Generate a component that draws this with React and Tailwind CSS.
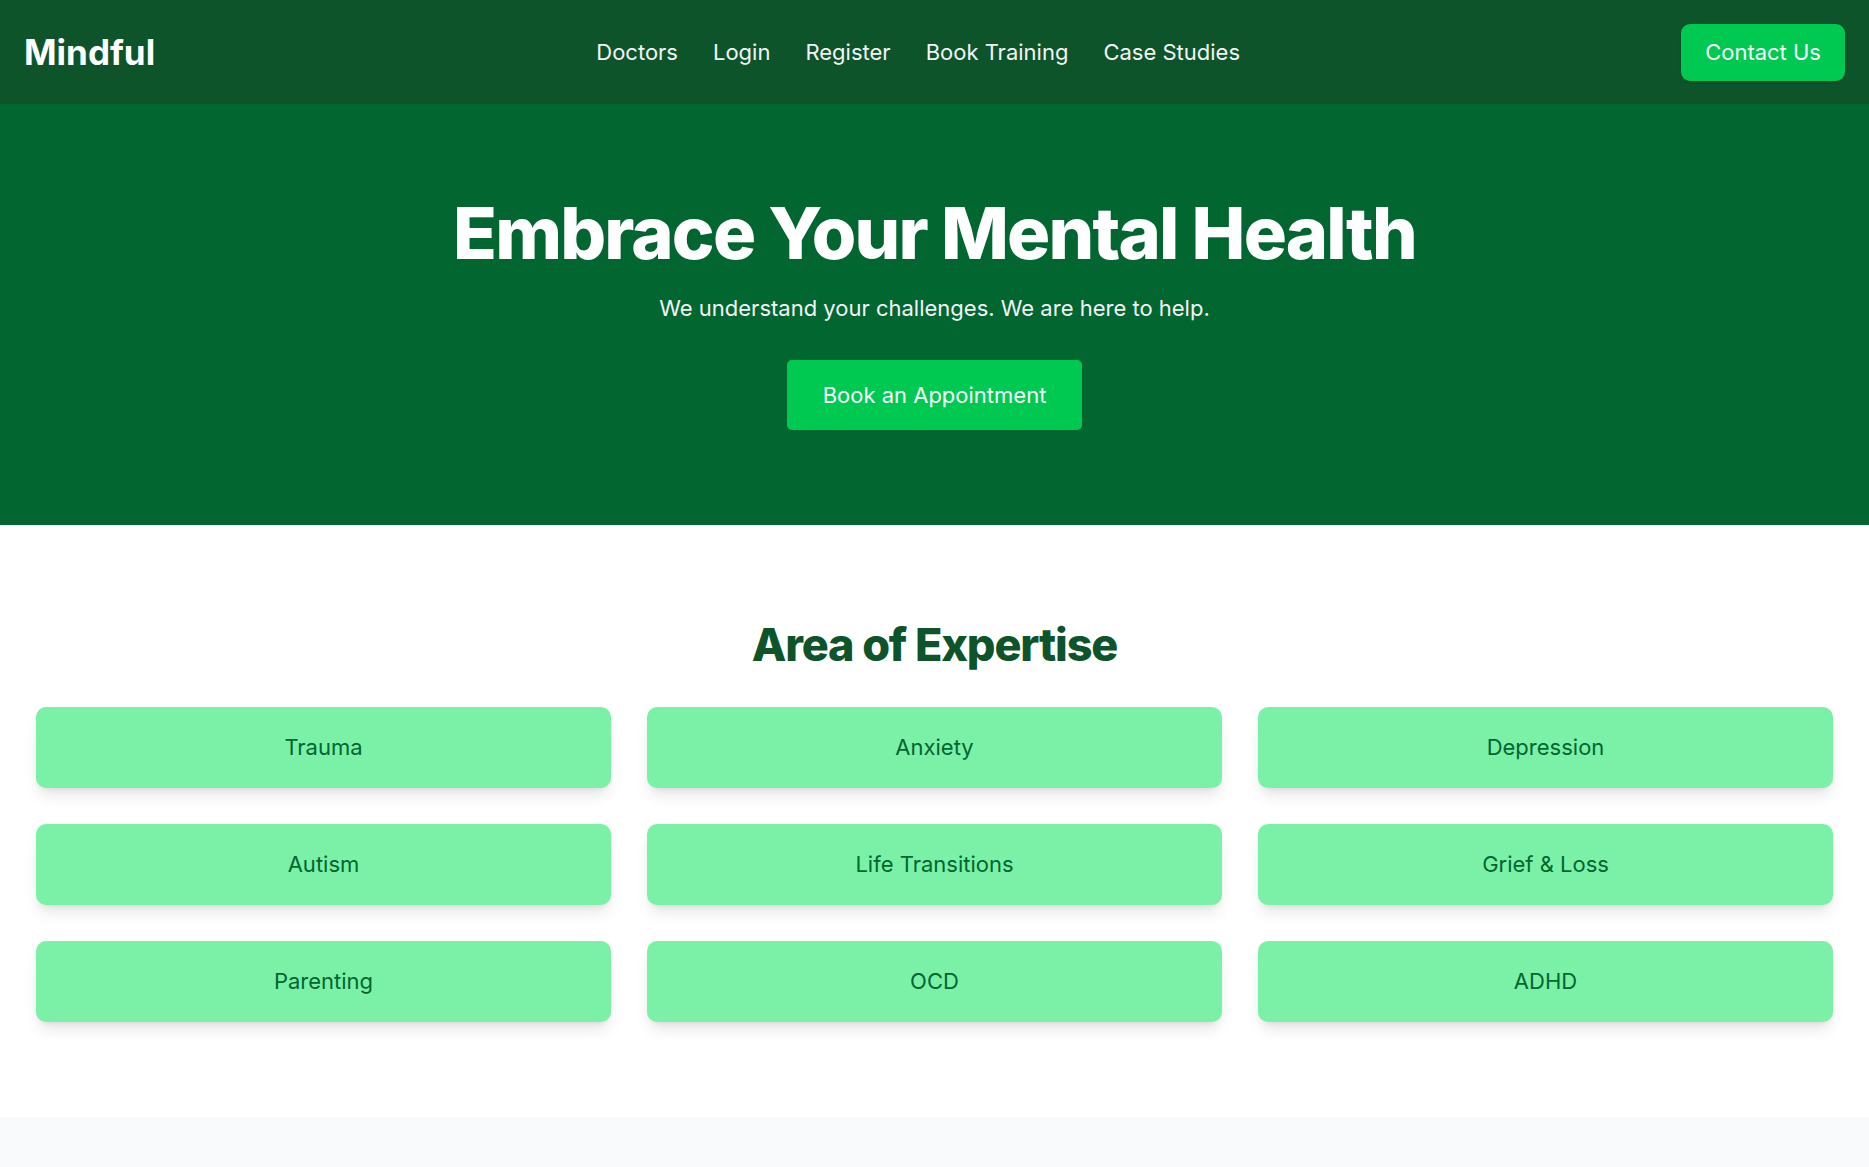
const navLinks = ['Doctors', 'Login', 'Register', 'Book Training', 'Case Studies']

const areas = [
  'Trauma',
  'Anxiety',
  'Depression',
  'Autism',
  'Life Transitions',
  'Grief & Loss',
  'Parenting',
  'OCD',
  'ADHD',
]

export default function App() {
  return (
    <div className="min-h-screen bg-gray-50 font-['Inter',sans-serif]">
      <nav className="h-[104px] bg-green-900 px-6 flex items-center justify-between shadow-md">
        <a href="#" className="text-white font-bold text-[35px]">Mindful</a>
        <ul className="flex items-center gap-[35px]">
          {navLinks.map(l => (
            <li key={l}>
              <a href="#" className="text-[22px] text-gray-100">{l}</a>
            </li>
          ))}
        </ul>
        <button className="h-[57px] px-[24px] rounded-[9px] bg-green-500 text-[22px] text-gray-50 shadow">
          Contact Us
        </button>
      </nav>

      <header className="bg-green-800 pt-[93px] pb-[95px] flex flex-col items-center text-center">
        <h1 className="text-white font-extrabold text-[72px] leading-none tracking-tight">
          Embrace Your Mental Health
        </h1>
        <p className="mt-[22px] text-[22px] leading-[35px] text-gray-100">
          We understand your challenges. We are here to help.
        </p>
        <button className="mt-[34px] h-[70px] px-[36px] rounded-[5px] bg-green-500 text-[22px] text-gray-50">
          Book an Appointment
        </button>
      </header>

      <section className="bg-white py-[95px] px-[36px]">
        <h2 className="text-center text-[45px] leading-[50px] font-extrabold text-green-900 tracking-tight">
          Area of Expertise
        </h2>
        <div className="mt-[37px] grid grid-cols-3 gap-[36px]">
          {areas.map(a => (
            <div
              key={a}
              className="h-[81px] rounded-[10px] bg-green-300 shadow-lg flex items-center justify-center text-[22px] text-green-800"
            >
              {a}
            </div>
          ))}
        </div>
      </section>

      <div className="bg-gray-50 h-[200px]"></div>
    </div>
  )
}
